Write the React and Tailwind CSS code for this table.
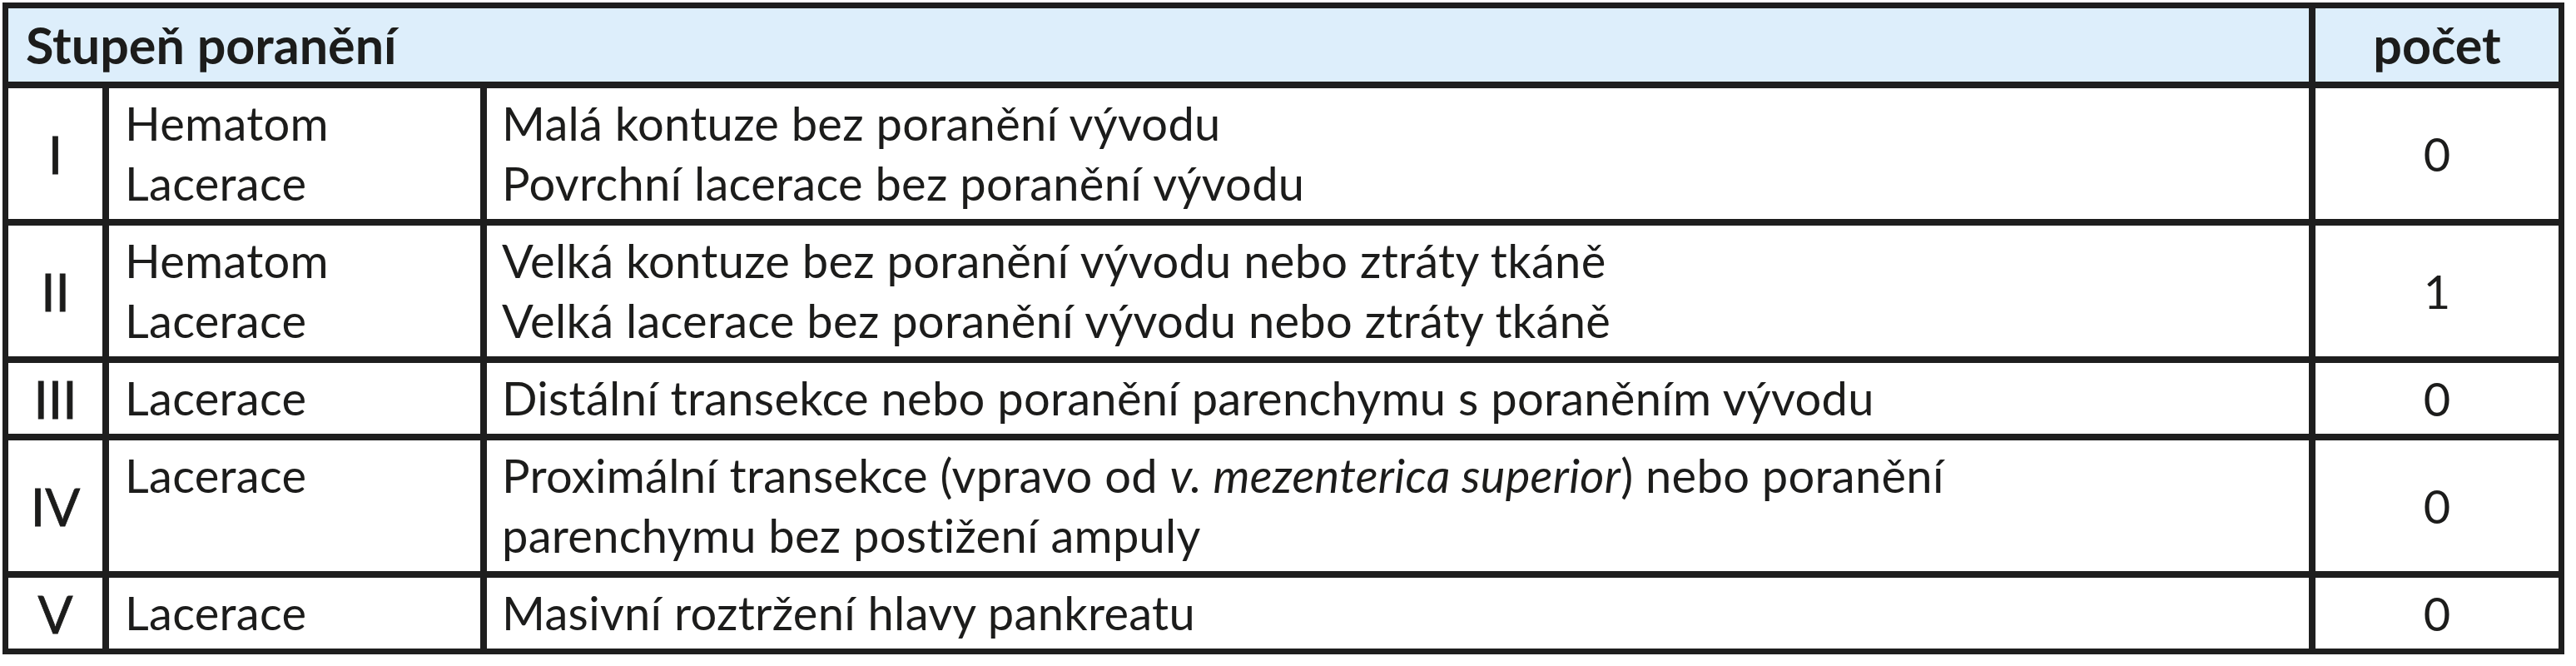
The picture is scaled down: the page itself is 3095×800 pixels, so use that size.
import React from "react";

const rows = [
  {
    grade: "I",
    type: ["Hematom", "Lacerace"],
    desc: ["Malá kontuze bez poranění vývodu", "Povrchní lacerace bez poranění vývodu"],
    count: "0",
  },
  {
    grade: "II",
    type: ["Hematom", "Lacerace"],
    desc: [
      "Velká kontuze bez poranění vývodu nebo ztráty tkáně",
      "Velká lacerace bez poranění vývodu nebo ztráty tkáně",
    ],
    count: "1",
  },
  {
    grade: "III",
    type: ["Lacerace"],
    desc: ["Distální transekce nebo poranění parenchymu s poraněním vývodu"],
    count: "0",
  },
  {
    grade: "IV",
    type: ["Lacerace"],
    desc: [
      <>
        Proximální transekce (vpravo od <i>v. mezenterica superior</i>) nebo poranění
      </>,
      "parenchymu bez postižení ampuly",
    ],
    count: "0",
  },
  {
    grade: "V",
    type: ["Lacerace"],
    desc: ["Masivní roztržení hlavy pankreatu"],
    count: "0",
  },
];

export default function App() {
  return (
    <div className="min-h-[800px] w-[3095px] bg-white pl-[3px] pt-[3px] font-[Lato,'Noto_Sans',sans-serif] text-[#1c1c1b]">
      <div className="grid w-[3078px] grid-cols-[113px_446px_2189px_292px] gap-[8px] bg-[#1e1e1e] p-[7px]">
        <div className="col-span-3 bg-[#ddeefb] py-[7px] pl-[21px] text-[61px] font-bold leading-[74px]">
          Stupeň poranění
        </div>
        <div className="bg-[#ddeefb] py-[7px] text-center text-[61px] font-bold leading-[74px]">
          počet
        </div>
        {rows.map((r) => (
          <React.Fragment key={r.grade}>
            <div className="flex items-center justify-center bg-white text-[62px] leading-[72px] [-webkit-text-stroke:0.8px_#1c1c1b]">
              {r.grade}
            </div>
            <div className="bg-white pt-[6px] pb-[7px] pl-[19px] text-[56px] leading-[72px] tracking-[0.3px]">
              {r.type.map((t, i) => (
                <div key={i}>{t}</div>
              ))}
            </div>
            <div className="bg-white pt-[6px] pb-[7px] pl-[18px] text-[56px] leading-[72px] tracking-[0.3px]">
              {r.desc.map((t, i) => (
                <div key={i}>{t}</div>
              ))}
            </div>
            <div className="flex items-center justify-center bg-white text-[56px] leading-[72px]">
              {r.count}
            </div>
          </React.Fragment>
        ))}
      </div>
    </div>
  );
}
